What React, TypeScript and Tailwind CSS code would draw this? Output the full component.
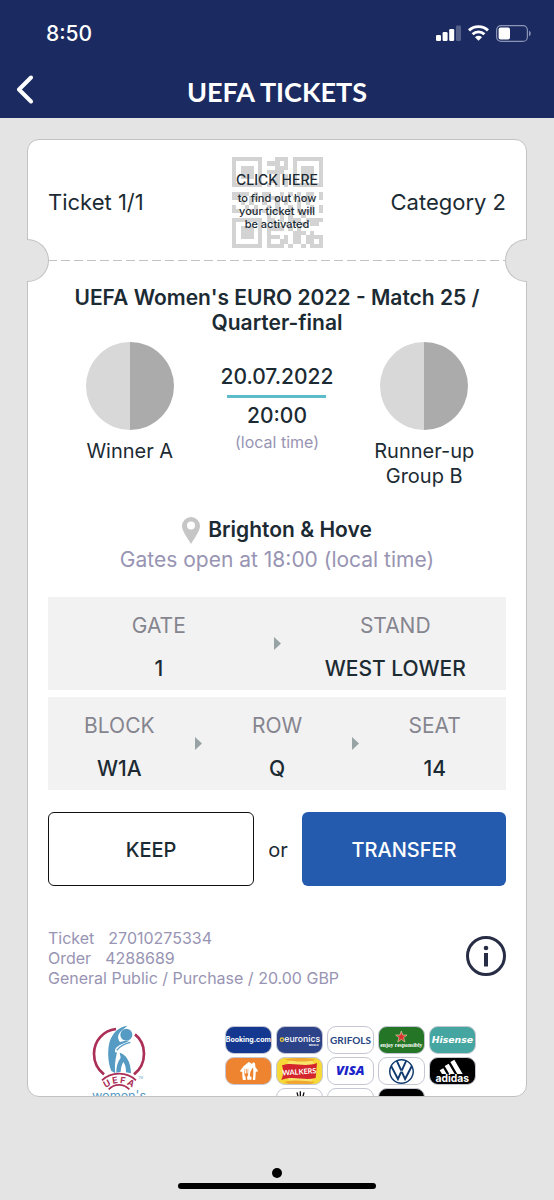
import React from 'react';
import { SiJusteat, SiVolkswagen } from 'react-icons/si';

const QR_ROWS = [
  '#######...###.#######',
  '#.....#.###.#.#.....#',
  '#.###.#...###.#.###.#',
  '#.###.#.####..#.###.#',
  '#.###.#...#.#.#.###.#',
  '#.....#..##.#.#.....#',
  '#######.#.#.#.#######',
  '.....................',
  '####.#.##..#.#.#.##.#',
  '##..##.#.##.#.#.##..#',
  '..#.#..#..#.#..#.#...',
  '#..#.#..#.#..#.#..#.#',
  '##..##.#.##..#.#.##.#',
  '........#..#.#..#....',
  '#######.##.#.###.####',
  '#.....#..##.#.#.#.##.',
  '#.###.#.####.#.#.....',
  '#.###.#.#.....###.#..',
  '#.###.#.###.#.##.####',
  '#.....#.#..##.##.##.#',
  '#######.####.#..#.###',
];

const QrBackground = () => (
  <svg viewBox="0 0 21 21" className="col-start-1 row-start-1 h-[91px] w-[91px]" fill="#d3d3d3" shapeRendering="crispEdges" aria-hidden="true">
    {QR_ROWS.map((row, y) =>
      row.split('').map((cell, x) => (cell === '#' ? <rect key={`${x}-${y}`} x={x} y={y} width="1" height="1" /> : null)),
    )}
  </svg>
);

const StatusBar = () => (
  <div className="flex h-[66px] items-center justify-between pr-[23px] pl-[46px]">
    <span className="pt-0.5 text-[21px] leading-6 font-medium">8:50</span>
    <div className="flex items-center gap-[7px]">
      <svg viewBox="0 0 25 16" className="h-4 w-[25px]" fill="#fff" aria-hidden="true">
        <rect x="0" y="10" width="5" height="6" rx="1.3" />
        <rect x="6.6" y="7" width="5" height="9" rx="1.3" />
        <rect x="13.2" y="4" width="5" height="12" rx="1.3" />
        <rect x="20" y="0.5" width="5" height="15.5" rx="1.3" opacity="0.25" />
      </svg>
      <svg viewBox="0 0 21 16" className="h-4 w-[21px]" fill="none" stroke="#fff" strokeWidth="2.9" aria-hidden="true">
        <path d="M1 5.4C6.3.4 14.7.4 20 5.4" />
        <path d="M4.6 9.3c3.3-3.2 8.5-3.2 11.8 0" />
        <path d="M7 12.2c2-1.8 5-1.8 7 0L10.5 15.8z" fill="#fff" stroke="none" />
      </svg>
      <svg viewBox="0 0 35 17" className="h-[17px] w-[35px]" aria-hidden="true">
        <rect x="0.6" y="0.6" width="30.8" height="15.8" rx="4.5" fill="none" stroke="#8a93b5" strokeWidth="1.2" />
        <rect x="2.6" y="2.6" width="11.4" height="11.8" rx="2" fill="#fff" />
        <path d="M33 5.8c2.3.8 2.3 4.6 0 5.4z" fill="#8a93b5" />
      </svg>
    </div>
  </div>
);

interface TeamProps {
  name: string;
}

const Team: React.FC<TeamProps> = ({ name }) => (
  <div className="flex flex-col items-center">
    <div className="flex h-22 w-22 overflow-hidden rounded-full">
      <div className="flex-1 bg-[#d8d8d8]" />
      <div className="flex-1 bg-[#ababab]" />
    </div>
    <p className="mt-[9px] max-w-28 text-center text-[20px] leading-[25px]">{name}</p>
  </div>
);

interface SeatInfoProps {
  items: { label: string; value: string }[];
}

const SeatInfo: React.FC<SeatInfoProps> = ({ items }) => (
  <div className="bg-[#f2f2f2]">
    <dl className="-mx-2 flex h-[93px] items-center">
      {items.map((item, index) => (
        <React.Fragment key={item.label}>
          {index > 0 && (
            <svg viewBox="0 0 7 13" className="-mx-1 h-[13px] w-[7px] shrink-0" fill="#98a3a5" aria-hidden="true">
              <path d="M0 0l7 6.5L0 13z" />
            </svg>
          )}
          <div className="flex flex-1 basis-0 flex-col items-center gap-[18px] pt-[7px] text-[21px] leading-[25px]">
            <dt className="text-[#85858f]">{item.label}</dt>
            <dd className="font-medium">{item.value}</dd>
          </div>
        </React.Fragment>
      ))}
    </dl>
  </div>
);

const EuroLogo = () => (
  <svg viewBox="60 36 180 240" className="h-20 w-[60px]" fill="none" role="img" aria-label="UEFA Women's EURO">
    <path d="M138 57C98 62 72 94 72 131c0 24 11 47 30 62" stroke="#ab2f57" strokeWidth="8" />
    <path d="M195 73c18 14 27 36 27 58 0 24-11 47-30 62" stroke="#ab2f57" strokeWidth="8" />
    <path d="M172 47c-28 4-48 24-55 56-5 27-2 58 7 80l12 7c-3-25 1-45 5-63-8 3-8-8-1-15 10-10 25-13 39-20-11 0-21 1-29 4-8-9-7-20 0-29 6-8 15-13 22-20z" fill="#559bc4" />
    <circle cx="169" cy="74" r="18" fill="#559bc4" />
    <path d="M140 121c10-13 24-20 41-24" stroke="#559bc4" strokeWidth="4" />
    <path d="M149 128c18 4 34 27 34 62l-15-3c0-14-2-23-8-31-5 7-7 18-8 29l-13 3c0-23 6-34 13-45z" fill="#559bc4" />
    <path d="M96 211c27-27 75-27 102 0M116 238c17-18 45-18 62 0" stroke="#ab2f57" strokeWidth="5" />
    <g fill="#ab2f57" fontFamily="Inter, sans-serif" fontWeight="700" fontSize="27" textAnchor="middle">
      <text transform="translate(115 229) rotate(-29)">U</text>
      <text transform="translate(136 220) rotate(-9)">E</text>
      <text transform="translate(157 220) rotate(9)">F</text>
      <text transform="translate(178 228) rotate(29)">A</text>
    </g>
    <text x="205" y="207" fill="#559bc4" fontFamily="Inter, sans-serif" fontSize="9">TM</text>
    <text x="147" y="269" fill="#559bc4" fontFamily="Inter, sans-serif" fontSize="38" textAnchor="middle">women's</text>
  </svg>
);

interface ChipProps {
  className: string;
  children?: React.ReactNode;
}

const Chip: React.FC<ChipProps> = ({ className, children }) => (
  <li className={`flex h-7 w-[47px] items-center justify-center overflow-hidden rounded-[9px] border border-[#c4c7d2] ${className}`}>
    {children}
  </li>
);

const Sponsors = () => (
  <ul className="flex w-[251px] flex-wrap justify-center gap-x-1 gap-y-[3px] leading-none">
    <Chip className="bg-[#14388f]">
      <svg viewBox="0 0 141 84" className="w-[47px] shrink-0">
        <text x="70" y="49" textAnchor="middle" fill="#fff" fontFamily="Inter, sans-serif" fontSize="21" fontWeight="700">Booking.com</text>
      </svg>
    </Chip>
    <Chip className="bg-[#2c4389]">
      <svg viewBox="0 0 141 84" className="w-[47px] shrink-0" fill="#fff">
        <circle cx="18" cy="41" r="5" fill="none" stroke="#e0bf3b" strokeWidth="4" />
        <text x="25" y="49" fontFamily="Inter, sans-serif" fontSize="26" fontWeight="500">euronics</text>
        <text x="98" y="59" fontFamily="Inter, sans-serif" fontSize="8" fontWeight="700">WORLD</text>
      </svg>
    </Chip>
    <Chip className="bg-white font-['Lato'] text-[10px] font-bold text-[#27457f]">GRIFOLS</Chip>
    <Chip className="bg-[#257526]">
      <svg viewBox="0 0 141 84" className="w-[47px] shrink-0">
        <path d="M70 15l4 12 13 0-10 8 4 13-11-8-11 8 4-13-10-8 13 0z" fill="#d9322e" stroke="#d9d8ac" strokeWidth="2" />
        <text x="70" y="64" textAnchor="middle" fill="#fff" fontFamily="Liberation Serif, serif" fontSize="17" fontWeight="700">enjoy responsibly</text>
      </svg>
    </Chip>
    <Chip className="bg-[#45a6a1]">
      <svg viewBox="0 0 141 84" className="w-[47px] shrink-0">
        <text x="70" y="51" textAnchor="middle" fill="#fff" fontFamily="DejaVu Sans, sans-serif" fontSize="28" fontWeight="700" fontStyle="italic">Hisense</text>
      </svg>
    </Chip>
    <Chip className="bg-[#ee8430] text-white">
      <SiJusteat className="h-[18px] w-[18px]" aria-label="Just Eat" />
    </Chip>
    <Chip className="bg-[#f6d839]">
      <svg viewBox="0 0 141 84" className="w-[47px] shrink-0">
        <circle cx="74" cy="41" r="45" fill="#f8e36b" />
        <path d="M26 8c28-7 68-7 93 0-20 7-59 7-93 0zM25 75c30-8 60-4 92 0-22 14-70 14-92 0z" fill="#f0a62f" />
        <path d="M18 25c33-12 65 8 105-7l-4 45c-35 10-67-9-103 6 7-15 7-28 2-44z" fill="#d4252c" />
        <text x="70" y="52" textAnchor="middle" fill="#fff" fontFamily="Lato, sans-serif" fontSize="22" fontWeight="700" transform="rotate(-4 71 45)">WALKERS</text>
      </svg>
    </Chip>
    <Chip className="bg-white">
      <svg viewBox="0 0 141 84" className="w-[47px] shrink-0">
        <text x="70" y="55" textAnchor="middle" fill="#1a24c9" fontFamily="Open Sans, sans-serif" fontSize="39" fontWeight="800" fontStyle="italic">VISA</text>
      </svg>
    </Chip>
    <Chip className="bg-white text-[#123c70]">
      <SiVolkswagen className="h-[25px] w-[25px]" aria-label="Volkswagen" />
    </Chip>
    <Chip className="bg-black">
      <svg viewBox="0 0 141 84" className="w-[47px] shrink-0" fill="#fff">
        <path d="M32 40l11-6 10 17H39zM47 27l12-7 18 31H61zM64 15l12-7 25 43H85z" />
        <text x="70" y="76" textAnchor="middle" fontFamily="Inter, sans-serif" fontSize="31" fontWeight="700">adidas</text>
      </svg>
    </Chip>
    <Chip className="bg-white">
      <svg viewBox="0 0 141 84" className="w-[47px] shrink-0" stroke="#111" strokeWidth="4">
        <path d="M63 13l5 20M73 10v25M84 13l-5 20" />
      </svg>
    </Chip>
    <Chip className="bg-white" />
    <Chip className="bg-black" />
  </ul>
);

const App: React.FC = () => {
  return (
    <div className="flex h-screen flex-col bg-[#e4e4e4] font-['Inter',sans-serif] text-[#1c2b33]">
      <header className="h-[118px] shrink-0 bg-[#1b2b61] text-white">
        <StatusBar />
        <div className="grid grid-cols-[1fr_auto_1fr] items-center px-4">
          <button type="button" aria-label="Back" className="h-11 w-11">
            <svg viewBox="0 0 19 29" className="h-[29px] w-[19px]" fill="none" stroke="#fff" strokeWidth="4" strokeLinecap="round" strokeLinejoin="round">
              <path d="M15 2.5l-12 12 12 12" />
            </svg>
          </button>
          <h1 className="pt-1.5 font-['Lato',sans-serif] text-[27px] leading-10 font-bold">UEFA TICKETS</h1>
        </div>
      </header>

      <main className="relative mx-[27px] mt-[21px] flex min-h-0 flex-1 flex-col rounded-xl border border-[#c2c2c2] bg-white">
        <span className="absolute top-[99px] -left-px h-[43px] w-[22px] rounded-r-full border border-l-0 border-[#c2c2c2] bg-[#e4e4e4]" />
        <span className="absolute top-[99px] -right-px h-[43px] w-[22px] rounded-l-full border border-r-0 border-[#c2c2c2] bg-[#e4e4e4]" />

        <div className="min-h-0 flex-1 overflow-hidden rounded-xl px-5">
          <div className="grid h-[120px] grid-cols-[1fr_auto_1fr] items-start pt-[17px] text-[22px]">
            <p className="mt-[27px] leading-9">Ticket 1/1</p>
            <button type="button" className="grid place-items-center">
              <QrBackground />
              <span className="z-10 col-start-1 row-start-1 flex flex-col items-center pb-0.5">
                <span className="mb-1 text-[14px] leading-4 font-medium">CLICK HERE</span>
                <span className="text-[11px] leading-[13px] font-medium">
                  to find out how
                  <br />
                  your ticket will
                  <br />
                  be activated
                </span>
              </span>
            </button>
            <p className="mt-[27px] text-right leading-9">Category 2</p>
          </div>
          <div className="h-px bg-[repeating-linear-gradient(90deg,#c2c2c2_0_9px,transparent_9px_13px)]" />

          <h2 className="pt-6 text-center text-[21px] leading-[25px] font-semibold">
            UEFA Women's EURO 2022 - Match 25 / Quarter-final
          </h2>

          <section className="mt-[7px] grid grid-cols-[5fr_4fr_5fr]">
            <Team name="Winner A" />
            <div className="flex flex-col items-center pt-[22px]">
              <p className="text-[21px] leading-[26px] font-medium">20.07.2022</p>
              <div className="mt-[5px] h-[3px] w-[99px] bg-[#5dbcc9]" />
              <p className="mt-[5px] text-[21px] leading-[26px] font-medium">20:00</p>
              <p className="mt-[3px] text-[16px] leading-5 text-[#9894b3]">(local time)</p>
            </div>
            <Team name="Runner-up Group B" />
          </section>

          <section className="mt-[26px] text-center">
            <p className="flex items-center justify-center gap-2 text-[21px] leading-[30px] font-semibold">
              <svg viewBox="0 0 18 27" className="h-[27px] w-[18px]" fill="#c6c6c6" fillRule="evenodd" aria-hidden="true">
                <path d="M9 0a9 9 0 0 1 9 9c0 4.5-4.5 10.5-9 18C4.500 19.500 0 13.500 0 9a9 9 0 0 1 9-9zm0 4.500a4 4 0 1 0 0 8 4 4 0 0 0 0-8z" />
              </svg>
              Brighton &amp; Hove
            </p>
            <p className="text-[21px] leading-[30px] text-[#9894b3]">Gates open at 18:00 (local time)</p>
          </section>

          <section className="mt-[22px] space-y-[7px]">
            <SeatInfo
              items={[
                { label: 'GATE', value: '1' },
                { label: 'STAND', value: 'WEST LOWER' },
              ]}
            />
            <SeatInfo
              items={[
                { label: 'BLOCK', value: 'W1A' },
                { label: 'ROW', value: 'Q' },
                { label: 'SEAT', value: '14' },
              ]}
            />
          </section>

          <div className="mt-[22px] flex items-center text-[20px]">
            <button type="button" className="h-[74px] flex-1 rounded-md border border-[#111] pt-0.5 font-medium">
              KEEP
            </button>
            <span className="w-12 pt-0.5 text-center">or</span>
            <button type="button" className="h-[74px] flex-1 rounded-md bg-[#255baf] pt-0.5 font-medium text-white">
              TRANSFER
            </button>
          </div>

          <section className="mt-[42px] flex items-center justify-between">
            <div className="text-[16px] leading-5 text-[#9894b3]">
              <p>
                <span className="mr-3.5">Ticket</span>27010275334
              </p>
              <p>
                <span className="mr-3.5">Order</span>4288689
              </p>
              <p>General Public / Purchase / 20.00 GBP</p>
            </div>
            <button type="button" aria-label="Ticket information" className="pb-1">
              <svg viewBox="0 0 40 40" className="h-10 w-10" fill="none" stroke="#272d45">
                <circle cx="20" cy="20" r="18.5" strokeWidth="3" />
                <circle cx="20" cy="12" r="2.3" fill="#272d45" stroke="none" />
                <path d="M20 17v13.5" strokeWidth="4" />
              </svg>
            </button>
          </section>

          <footer className="mt-[34px] flex items-start justify-between pr-[30px] pl-[42px]">
            <EuroLogo />
            <div className="pt-1">
              <Sponsors />
            </div>
          </footer>
        </div>
      </main>

      <div className="flex shrink-0 flex-col items-center gap-[5px] pt-[71px] pb-[11px]">
        <span className="h-2.5 w-2.5 rounded-full bg-black" />
        <span className="h-1.5 w-[198px] rounded-full bg-black" />
      </div>
    </div>
  );
};

export default App;
